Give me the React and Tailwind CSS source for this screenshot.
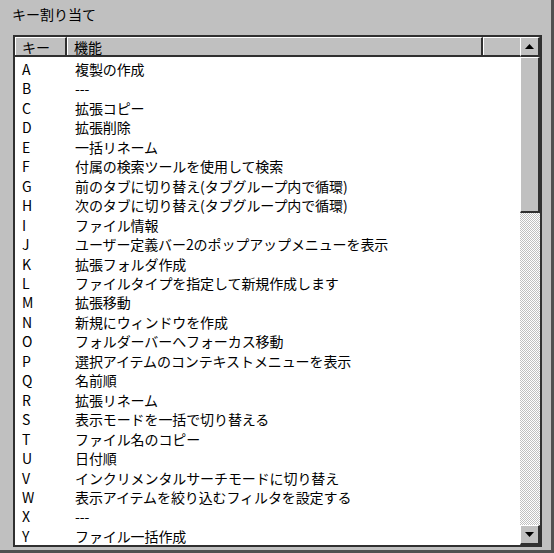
const rows = [
  ['A', '複製の作成'],
  ['B', '---'],
  ['C', '拡張コピー'],
  ['D', '拡張削除'],
  ['E', '一括リネーム'],
  ['F', '付属の検索ツールを使用して検索'],
  ['G', '前のタブに切り替え(タブグループ内で循環)'],
  ['H', '次のタブに切り替え(タブグループ内で循環)'],
  ['I', 'ファイル情報'],
  ['J', 'ユーザー定義バー2のポップアップメニューを表示'],
  ['K', '拡張フォルダ作成'],
  ['L', 'ファイルタイプを指定して新規作成します'],
  ['M', '拡張移動'],
  ['N', '新規にウィンドウを作成'],
  ['O', 'フォルダーバーへフォーカス移動'],
  ['P', '選択アイテムのコンテキストメニューを表示'],
  ['Q', '名前順'],
  ['R', '拡張リネーム'],
  ['S', '表示モードを一括で切り替える'],
  ['T', 'ファイル名のコピー'],
  ['U', '日付順'],
  ['V', 'インクリメンタルサーチモードに切り替え'],
  ['W', '表示アイテムを絞り込むフィルタを設定する'],
  ['X', '---'],
  ['Y', 'ファイル一括作成'],
];

const font = { fontFamily: '"Noto Sans CJK JP", "Liberation Sans", sans-serif' };

function ScrollButton({ up }) {
  return (
    <div className="h-[20px] w-[20px] bg-[#c0c0c0] border-t border-l border-t-white border-l-white border-r-2 border-b-2 border-r-[#303030] border-b-[#303030] flex items-center justify-center">
      <svg width="9" height="5" viewBox="0 0 9 5">
        {up ? <polygon points="4.5,0 9,5 0,5" fill="#000" /> : <polygon points="0,0 9,0 4.5,5" fill="#000" />}
      </svg>
    </div>
  );
}

export default function App() {
  return (
    <div
      className="w-[554px] h-[553px] bg-[#c0c0c0] border-r-[3px] border-b-[3px] border-r-[#505050] border-b-[#505050] text-black overflow-hidden"
      style={font}
    >
      <div className="pl-[12px] pt-[4px] h-[35px] text-[14px] leading-[20px]">キー割り当て</div>

      <div className="ml-[13px] w-[529px] h-[512px] border-2 border-[#303030] bg-white flex">
        <div className="flex-1 flex flex-col min-w-0">
          {/* header */}
          <div className="flex h-[20px] bg-[#c0c0c0] border-b-2 border-b-[#303030] text-[14px] leading-[18px]">
            <div className="w-[52px] border-t border-l border-white border-r-2 border-r-[#303030] pl-[6px]">キー</div>
            <div className="w-[416px] border-t border-l border-white border-r-2 border-r-[#303030] pl-[6px]">機能</div>
            <div className="flex-1 border-t border-l border-white" />
          </div>
          {/* rows */}
          <div className="pt-[3px] text-[14px] leading-[19.46px]">
            {rows.map(([k, f]) => (
              <div key={k} className="flex h-[19.46px]">
                <div className="w-[52px] pl-[7px]">{k}</div>
                <div className="pl-[8px] whitespace-nowrap tracking-[-0.1px]">{f}</div>
              </div>
            ))}
          </div>
        </div>

        {/* scrollbar */}
        <div className="w-[20px] flex flex-col">
          <ScrollButton up />
          <div className="h-[156px] bg-[#c0c0c0] border-t border-l border-t-white border-l-white border-r-2 border-b-2 border-r-[#303030] border-b-[#303030]" />
          <div className="flex-1 bg-[repeating-conic-gradient(#c0c0c0_0_25%,#ffffff_0_50%)] bg-[length:2px_2px]" />
          <ScrollButton />
        </div>
      </div>
    </div>
  );
}
